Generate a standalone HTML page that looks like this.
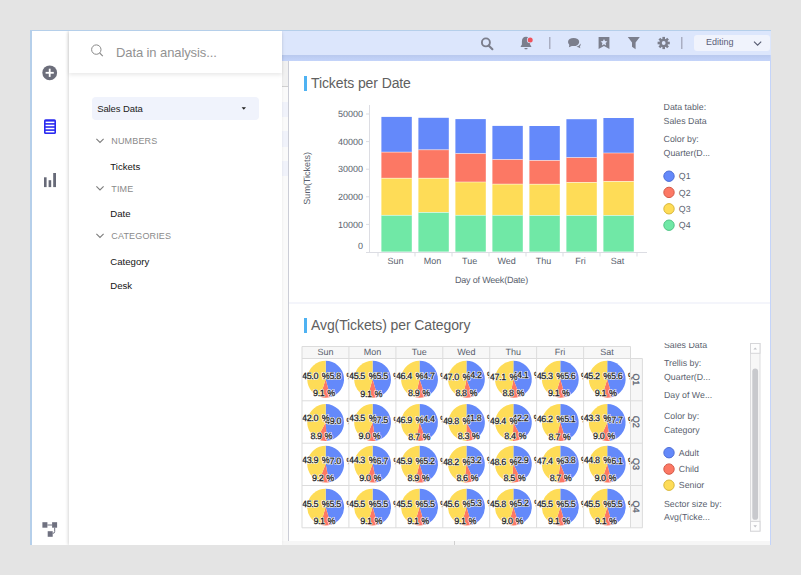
<!DOCTYPE html>
<html><head><meta charset="utf-8"><title>Analysis</title>
<style>
html,body{margin:0;padding:0}
body{width:801px;height:575px;background:#e4e4e4;position:relative;overflow:hidden;font-family:"Liberation Sans",sans-serif}
#win{position:absolute;left:30px;top:30px;width:741px;height:515px;background:#fff;overflow:hidden}
#bl{position:absolute;left:0;top:0;width:2px;height:515px;background:#b5cfea}
#bt{position:absolute;left:0;top:0;width:741px;height:1px;background:#b5cfea}
#side{position:absolute;left:2px;top:1px;width:36px;height:514px;background:#fff}
#panel{position:absolute;left:38.5px;top:1px;width:213.5px;height:514px;background:#fff;box-shadow:-1px 0 3px rgba(0,0,0,0.16)}
#phead{position:absolute;left:0;top:0;width:213.5px;height:42px;background:#fff;box-shadow:0 2px 4px rgba(0,0,0,0.09)}
#ptitle{position:absolute;left:47.5px;top:13.5px;font-size:13px;letter-spacing:-0.1px;color:#929292;white-space:nowrap;line-height:16px}
#dd{position:absolute;left:23px;top:66px;width:167px;height:22.6px;background:#f0f3fc;border-radius:4px}
#dd span{position:absolute;left:5.7px;top:5.5px;font-size:9.5px;letter-spacing:-0.1px;color:#222;line-height:12px;white-space:nowrap}
.grp{position:absolute;left:42.8px;font-size:9px;letter-spacing:0.15px;color:#8a8a8a;line-height:12px;white-space:nowrap}
.itm{position:absolute;left:41.8px;font-size:9.6px;color:#151515;line-height:12px;white-space:nowrap}
#tb{position:absolute;left:252px;top:1px;width:489px;height:24px;background:#dce6fc}
#tb2{position:absolute;left:252px;top:25px;width:489px;height:6px;background:linear-gradient(#b9c9ee,#c4d4fa)}
#edit{position:absolute;left:664px;top:4.2px;width:76px;height:15.8px;background:#f0f3fc;border-radius:3px}
#edit span{position:absolute;left:12px;top:1px;font-size:9px;color:#5b6078;line-height:12px}
#strip{position:absolute;left:252px;top:31px;width:6px;height:484px;background:#fafafa}
#vline{position:absolute;left:258px;top:31px;width:1px;height:480px;background:#cbcdd6}
#strip i{position:absolute;left:0;width:6px;display:block}
#br{position:absolute;left:740px;top:25px;width:1px;height:490px;background:#c4d4fa}
#bot{position:absolute;left:252px;top:510.7px;width:487.5px;height:4.3px;background:#f6f6f6}
#sep{position:absolute;left:259px;top:272px;width:481px;height:2px;background:#f4f5fb}
.ttl{position:absolute;font-size:14px;letter-spacing:-0.1px;color:#606060;line-height:18px;white-space:nowrap}
.mark{position:absolute;width:3px;height:15.5px;background:#4fb2f2}
svg text{font-family:"Liberation Sans",sans-serif;text-rendering:geometricPrecision}
.ax{font-size:9px;fill:#5a5f6e}
.lg{font-size:8.8px;fill:#5a5f6e}
.ph{font-size:9px;letter-spacing:-0.4px;word-spacing:0.7px;fill:#fff;stroke:rgba(255,255,255,0.9);stroke-width:1.6px;stroke-linejoin:round}
.pl{font-size:9px;letter-spacing:-0.4px;word-spacing:0.7px;fill:#1c1c1c;stroke:#1c1c1c;stroke-width:0.25px}
#ov{position:absolute;left:0;top:0}
</style></head><body>
<div id="win">
 <div id="side"></div>
 <div id="tb"><div id="edit" style="left:412px"><span>Editing</span></div></div>
 <div id="tb2"></div>
 <div id="strip"><i style="top:0;height:25.5px;background:#f1f1f1"></i><i style="top:25px;height:1px;background:#d0d0d0"></i><i style="top:40.5px;height:15px;background:#f0f2fa"></i><i style="top:70px;height:15.5px;background:#f0f2fa"></i><i style="top:100px;height:15px;background:#f0f2fa"></i></div><div id="vline"></div>
 <div id="br"></div>
 <div id="sep"></div>
 <div id="bot"></div>
 <div class="mark" style="left:274.3px;top:45.5px"></div>
 <div class="ttl" style="left:281px;top:44px">Tickets per Date</div>
 <div class="mark" style="left:274.3px;top:287.5px"></div>
 <div class="ttl" style="left:281px;top:286px">Avg(Tickets) per Category</div>
 <div id="panel">
  <div id="dd"><span>Sales Data</span></div>
  <div class="grp" style="top:103.5px">NUMBERS</div>
  <div class="itm" style="top:129.5px">Tickets</div>
  <div class="grp" style="top:151.5px">TIME</div>
  <div class="itm" style="top:177px">Date</div>
  <div class="grp" style="top:199px">CATEGORIES</div>
  <div class="itm" style="top:225px">Category</div>
  <div class="itm" style="top:248.5px">Desk</div>
  <div id="phead"><div id="ptitle">Data in analysis...</div></div>
 </div>
 <div id="bl"></div><div id="bt"></div>
</div>
<svg id="ov" width="801" height="575" viewBox="0 0 801 575">
<!-- sidebar icons -->
<circle cx="49.7" cy="72.8" r="7.4" fill="#6c6e7b"/>
<rect x="45.6" y="71.9" width="8.2" height="1.8" fill="#fff"/><rect x="48.8" y="68.7" width="1.8" height="8.2" fill="#fff"/>
<rect x="44" y="119.2" width="12" height="14.8" rx="1.6" fill="#2a2af0"/>
<rect x="45.6" y="121.6" width="8.8" height="1.5" fill="#fff"/><rect x="45.6" y="124.7" width="8.8" height="1.5" fill="#fff"/><rect x="45.6" y="127.8" width="8.8" height="1.5" fill="#fff"/><rect x="45.6" y="130.9" width="8.8" height="1.5" fill="#fff"/>
<rect x="44" y="177.3" width="2.6" height="9.8" fill="#676a78"/><rect x="48.6" y="180.2" width="2.6" height="6.9" fill="#676a78"/><rect x="53.2" y="173" width="2.8" height="14.1" fill="#676a78"/>
<rect x="42.4" y="522.2" width="5" height="5.5" fill="#6f7180"/><rect x="52.1" y="522.2" width="5" height="5.5" fill="#6f7180"/><rect x="47.7" y="531.2" width="5" height="5.6" fill="#6f7180"/>
<path d="M47.4 525H52.1M54.7 527.7V531.5Q54.7 533.4 52.7 533.4" stroke="#6f7180" stroke-width="1" fill="none"/>
<!-- panel search -->
<circle cx="96.3" cy="49.6" r="4.7" fill="none" stroke="#8a8a8a" stroke-width="1"/><path d="M99.7 53L102.8 56.1" stroke="#8a8a8a" stroke-width="1.1"/>
<path d="M241.6 107.2h4.4l-2.2 2.6z" fill="#222"/>
<path d="M96.4 138.8l3.6 3.6 3.6-3.6" stroke="#7d7d7d" stroke-width="1.1" fill="none"/>
<path d="M96.4 186.4l3.6 3.6 3.6-3.6" stroke="#7d7d7d" stroke-width="1.1" fill="none"/>
<path d="M96.4 233.9l3.6 3.6 3.6-3.6" stroke="#7d7d7d" stroke-width="1.1" fill="none"/>
<!-- toolbar icons -->
<g fill="#7b7e8c" stroke="none">
<circle cx="485.9" cy="42.4" r="4" fill="none" stroke="#7b7e8c" stroke-width="1.9"/><path d="M488.6 45.4L492.4 49.2" stroke="#7b7e8c" stroke-width="2.1" stroke-linecap="round"/>
<path d="M526 36.8c-2.6 0-4.1 2-4.1 4.6v3.2l-1.2 1.8v0.7h10.6v-0.7l-1.2-1.8v-3.2c0-2.6-1.5-4.6-4.1-4.6z"/><rect x="524.4" y="48" width="3.2" height="1.2" rx="0.6"/>
<circle cx="530.2" cy="40" r="3.3" fill="#dce6fc"/><circle cx="530.2" cy="40" r="2.5" fill="#f0525c"/>
<rect x="549" y="37" width="1.5" height="12" fill="#a9aec2"/>
<ellipse cx="573.6" cy="42" rx="5.6" ry="4.1"/><path d="M569.5 44l-0.6 3.3 3.6-1.6z"/><path d="M576.5 46.6c2.2-0.4 3.4-1.6 3.9-3.2 0.6 1.2 0 2.6-0.6 3.2l0.6 1.6-2-0.9c-0.8 0.1-1.4-0.2-1.9-0.7z"/>
<path d="M598.6 37h10.8v11.9l-5.4-3-5.4 3z"/><path d="M604 38.9l1 2.2 2.4 0.3-1.8 1.6 0.5 2.4-2.1-1.2-2.1 1.2 0.5-2.4-1.8-1.6 2.4-0.3z" fill="#dce6fc"/>
<path d="M627.8 37h12l-4.2 5.6v6.6l-3.6-2.4v-4.2z"/>
<rect x="681" y="37" width="1.5" height="12" fill="#a9aec2"/>
</g>
<g transform="translate(663.7,43)" fill="#7b7e8c">
<circle r="4.3"/>
<rect x="-1.3" y="-6.1" width="2.6" height="3" transform="rotate(0)"/><rect x="-1.3" y="-6.1" width="2.6" height="3" transform="rotate(45)"/><rect x="-1.3" y="-6.1" width="2.6" height="3" transform="rotate(90)"/><rect x="-1.3" y="-6.1" width="2.6" height="3" transform="rotate(135)"/><rect x="-1.3" y="-6.1" width="2.6" height="3" transform="rotate(180)"/><rect x="-1.3" y="-6.1" width="2.6" height="3" transform="rotate(225)"/><rect x="-1.3" y="-6.1" width="2.6" height="3" transform="rotate(270)"/><rect x="-1.3" y="-6.1" width="2.6" height="3" transform="rotate(315)"/>
<circle r="1.9" fill="#dce6fc"/>
</g>
<path d="M754 41.6l3.6 3.6 3.6-3.6" stroke="#555a70" stroke-width="1.1" fill="none"/>
<!-- bar chart -->
<rect x="369" y="105" width="1" height="147.5" fill="#dcdde3"/>
<rect x="366" y="252" width="281" height="1" fill="#dcdde3"/>
<rect x="366" y="113.5" width="3" height="1" fill="#dcdde3"/>
<rect x="366" y="141.1" width="3" height="1" fill="#dcdde3"/>
<rect x="366" y="168.7" width="3" height="1" fill="#dcdde3"/>
<rect x="366" y="196.3" width="3" height="1" fill="#dcdde3"/>
<rect x="366" y="223.9" width="3" height="1" fill="#dcdde3"/>
<rect x="377.5" y="252" width="1" height="4.5" fill="#dcdde3"/>
<rect x="414.5" y="252" width="1" height="4.5" fill="#dcdde3"/>
<rect x="451.5" y="252" width="1" height="4.5" fill="#dcdde3"/>
<rect x="488.5" y="252" width="1" height="4.5" fill="#dcdde3"/>
<rect x="525.5" y="252" width="1" height="4.5" fill="#dcdde3"/>
<rect x="562.5" y="252" width="1" height="4.5" fill="#dcdde3"/>
<rect x="599.5" y="252" width="1" height="4.5" fill="#dcdde3"/>
<rect x="636.5" y="252" width="1" height="4.5" fill="#dcdde3"/>
<rect x="381.4" y="116.9" width="30.4" height="35.2" fill="#6489FA"/>
<rect x="381.4" y="152.1" width="30.4" height="26.1" fill="#FC7864"/>
<rect x="381.4" y="178.2" width="30.4" height="37.1" fill="#FEDC57"/>
<rect x="381.4" y="215.3" width="30.4" height="36.3" fill="#70E8A6"/>
<rect x="381.4" y="151.7" width="30.4" height="0.8" fill="#fff" opacity="0.6"/>
<rect x="381.4" y="177.8" width="30.4" height="0.8" fill="#fff" opacity="0.6"/>
<rect x="381.4" y="214.9" width="30.4" height="0.8" fill="#fff" opacity="0.6"/>
<text x="395.6" y="264.3" text-anchor="middle" class="ax">Sun</text>
<rect x="418.4" y="117.8" width="30.4" height="32.0" fill="#6489FA"/>
<rect x="418.4" y="149.8" width="30.4" height="28.4" fill="#FC7864"/>
<rect x="418.4" y="178.2" width="30.4" height="34.2" fill="#FEDC57"/>
<rect x="418.4" y="212.4" width="30.4" height="39.2" fill="#70E8A6"/>
<rect x="418.4" y="149.4" width="30.4" height="0.8" fill="#fff" opacity="0.6"/>
<rect x="418.4" y="177.8" width="30.4" height="0.8" fill="#fff" opacity="0.6"/>
<rect x="418.4" y="212.0" width="30.4" height="0.8" fill="#fff" opacity="0.6"/>
<text x="432.6" y="264.3" text-anchor="middle" class="ax">Mon</text>
<rect x="455.4" y="119.1" width="30.4" height="34.5" fill="#6489FA"/>
<rect x="455.4" y="153.6" width="30.4" height="28.4" fill="#FC7864"/>
<rect x="455.4" y="182.0" width="30.4" height="33.3" fill="#FEDC57"/>
<rect x="455.4" y="215.3" width="30.4" height="36.3" fill="#70E8A6"/>
<rect x="455.4" y="153.2" width="30.4" height="0.8" fill="#fff" opacity="0.6"/>
<rect x="455.4" y="181.6" width="30.4" height="0.8" fill="#fff" opacity="0.6"/>
<rect x="455.4" y="214.9" width="30.4" height="0.8" fill="#fff" opacity="0.6"/>
<text x="469.6" y="264.3" text-anchor="middle" class="ax">Tue</text>
<rect x="492.4" y="125.9" width="30.4" height="33.7" fill="#6489FA"/>
<rect x="492.4" y="159.6" width="30.4" height="24.5" fill="#FC7864"/>
<rect x="492.4" y="184.1" width="30.4" height="31.2" fill="#FEDC57"/>
<rect x="492.4" y="215.3" width="30.4" height="36.3" fill="#70E8A6"/>
<rect x="492.4" y="159.2" width="30.4" height="0.8" fill="#fff" opacity="0.6"/>
<rect x="492.4" y="183.7" width="30.4" height="0.8" fill="#fff" opacity="0.6"/>
<rect x="492.4" y="214.9" width="30.4" height="0.8" fill="#fff" opacity="0.6"/>
<text x="506.6" y="264.3" text-anchor="middle" class="ax">Wed</text>
<rect x="529.4" y="126.0" width="30.4" height="34.4" fill="#6489FA"/>
<rect x="529.4" y="160.4" width="30.4" height="23.8" fill="#FC7864"/>
<rect x="529.4" y="184.2" width="30.4" height="31.2" fill="#FEDC57"/>
<rect x="529.4" y="215.4" width="30.4" height="36.2" fill="#70E8A6"/>
<rect x="529.4" y="160.0" width="30.4" height="0.8" fill="#fff" opacity="0.6"/>
<rect x="529.4" y="183.8" width="30.4" height="0.8" fill="#fff" opacity="0.6"/>
<rect x="529.4" y="215.0" width="30.4" height="0.8" fill="#fff" opacity="0.6"/>
<text x="543.6" y="264.3" text-anchor="middle" class="ax">Thu</text>
<rect x="566.4" y="119.2" width="30.4" height="38.4" fill="#6489FA"/>
<rect x="566.4" y="157.6" width="30.4" height="24.8" fill="#FC7864"/>
<rect x="566.4" y="182.4" width="30.4" height="33.0" fill="#FEDC57"/>
<rect x="566.4" y="215.4" width="30.4" height="36.2" fill="#70E8A6"/>
<rect x="566.4" y="157.2" width="30.4" height="0.8" fill="#fff" opacity="0.6"/>
<rect x="566.4" y="182.0" width="30.4" height="0.8" fill="#fff" opacity="0.6"/>
<rect x="566.4" y="215.0" width="30.4" height="0.8" fill="#fff" opacity="0.6"/>
<text x="580.6" y="264.3" text-anchor="middle" class="ax">Fri</text>
<rect x="603.4" y="118.0" width="30.4" height="35.0" fill="#6489FA"/>
<rect x="603.4" y="153.0" width="30.4" height="28.4" fill="#FC7864"/>
<rect x="603.4" y="181.4" width="30.4" height="34.0" fill="#FEDC57"/>
<rect x="603.4" y="215.4" width="30.4" height="36.2" fill="#70E8A6"/>
<rect x="603.4" y="152.6" width="30.4" height="0.8" fill="#fff" opacity="0.6"/>
<rect x="603.4" y="181.0" width="30.4" height="0.8" fill="#fff" opacity="0.6"/>
<rect x="603.4" y="215.0" width="30.4" height="0.8" fill="#fff" opacity="0.6"/>
<text x="617.6" y="264.3" text-anchor="middle" class="ax">Sat</text>
<text x="363" y="117.2" text-anchor="end" class="ax">50000</text>
<text x="363" y="144.8" text-anchor="end" class="ax">40000</text>
<text x="363" y="172.4" text-anchor="end" class="ax">30000</text>
<text x="363" y="200.0" text-anchor="end" class="ax">20000</text>
<text x="363" y="227.6" text-anchor="end" class="ax">10000</text>
<text x="363" y="248.6" text-anchor="end" class="ax">0</text>
<text x="491.5" y="283.4" text-anchor="middle" class="ax" style="letter-spacing:-0.2px">Day of Week(Date)</text>
<text transform="translate(310.3,178.3) rotate(-90)" text-anchor="middle" class="ax">Sum(Tickets)</text>
<text x="663.6" y="110.4" class="lg">Data table:</text>
<text x="663.6" y="123.7" class="lg">Sales Data</text>
<text x="663.6" y="142.2" class="lg">Color by:</text>
<text x="663.6" y="155.9" class="lg">Quarter(D...</text>
<circle cx="669" cy="176.2" r="5.2" fill="#6489FA" stroke="#4f6fd6" stroke-width="1"/><text x="678.8" y="179.39999999999998" class="lg">Q1</text>
<circle cx="669" cy="192.4" r="5.2" fill="#FC7864" stroke="#d45a48" stroke-width="1"/><text x="678.8" y="195.6" class="lg">Q2</text>
<circle cx="669" cy="208.8" r="5.2" fill="#FEDC57" stroke="#d8b73c" stroke-width="1"/><text x="678.8" y="212.0" class="lg">Q3</text>
<circle cx="669" cy="225.2" r="5.2" fill="#70E8A6" stroke="#52c486" stroke-width="1"/><text x="678.8" y="228.39999999999998" class="lg">Q4</text>
<!-- trellis -->
<rect x="302.0" y="346.5" width="328.5" height="12.0" fill="#f7f7f7"/>
<rect x="630.5" y="358.5" width="11.9" height="169.3" fill="#f7f7f7"/>
<rect x="301.5" y="346.5" width="1" height="181.3" fill="#dcdcdc"/>
<rect x="348.4" y="346.5" width="1" height="181.3" fill="#dcdcdc"/>
<rect x="395.4" y="346.5" width="1" height="181.3" fill="#dcdcdc"/>
<rect x="442.3" y="346.5" width="1" height="181.3" fill="#dcdcdc"/>
<rect x="489.2" y="346.5" width="1" height="181.3" fill="#dcdcdc"/>
<rect x="536.1" y="346.5" width="1" height="181.3" fill="#dcdcdc"/>
<rect x="583.1" y="346.5" width="1" height="181.3" fill="#dcdcdc"/>
<rect x="630.0" y="346.5" width="1" height="181.3" fill="#dcdcdc"/>
<rect x="641.9" y="358.5" width="1" height="169.3" fill="#dcdcdc"/>
<rect x="302.0" y="346.0" width="328.5" height="1" fill="#dcdcdc"/>
<rect x="302.0" y="358.0" width="340.4" height="1" fill="#dcdcdc"/>
<rect x="302.0" y="400.3" width="340.4" height="1" fill="#dcdcdc"/>
<rect x="302.0" y="442.7" width="340.4" height="1" fill="#dcdcdc"/>
<rect x="302.0" y="485.0" width="340.4" height="1" fill="#dcdcdc"/>
<rect x="302.0" y="527.3" width="340.4" height="1" fill="#dcdcdc"/>
<text x="325.5" y="355.0" text-anchor="middle" class="ax">Sun</text>
<text x="372.4" y="355.0" text-anchor="middle" class="ax">Mon</text>
<text x="419.3" y="355.0" text-anchor="middle" class="ax">Tue</text>
<text x="466.3" y="355.0" text-anchor="middle" class="ax">Wed</text>
<text x="513.2" y="355.0" text-anchor="middle" class="ax">Thu</text>
<text x="560.1" y="355.0" text-anchor="middle" class="ax">Fri</text>
<text x="607.0" y="355.0" text-anchor="middle" class="ax">Sat</text>
<text transform="translate(633.2,379.4) rotate(90)" text-anchor="middle" class="ax" style="stroke:#5a5f6e;stroke-width:0.3px">Q1</text>
<text transform="translate(633.2,421.7) rotate(90)" text-anchor="middle" class="ax" style="stroke:#5a5f6e;stroke-width:0.3px">Q2</text>
<text transform="translate(633.2,464.0) rotate(90)" text-anchor="middle" class="ax" style="stroke:#5a5f6e;stroke-width:0.3px">Q3</text>
<text transform="translate(633.2,506.4) rotate(90)" text-anchor="middle" class="ax" style="stroke:#5a5f6e;stroke-width:0.3px">Q4</text>
<svg x="302.50" y="359.00" width="45.93" height="41.33" viewBox="0.5 0.5 45.93 41.33"><path d="M23.66 20.77L23.66 2.37A18.4 18.4 0 0 1 28.41 38.54Z" fill="#6489FA"/><path d="M23.66 20.77L28.41 38.54A18.4 18.4 0 0 1 18.03 38.28Z" fill="#FC7864"/><path d="M23.66 20.77L18.03 38.28A18.4 18.4 0 0 1 23.66 2.37Z" fill="#FEDC57"/><text x="22.9" y="20.5" class="ph">45.8 <tspan dx="2.8">%</tspan></text><text x="22.9" y="20.5" class="pl">45.8 <tspan dx="2.8">%</tspan></text><text x="11.1" y="37.9" class="ph">9.1 %</text><text x="11.1" y="37.9" class="pl">9.1 %</text><text x="0.1" y="20.1" class="ph">45.0 <tspan dx="0.9">%</tspan></text><text x="0.1" y="20.1" class="pl">45.0 <tspan dx="0.9">%</tspan></text></svg>
<svg x="349.43" y="359.00" width="45.93" height="41.33" viewBox="0.5 0.5 45.93 41.33"><path d="M23.66 20.77L23.66 2.37A18.4 18.4 0 0 1 28.85 38.42Z" fill="#6489FA"/><path d="M23.66 20.77L28.85 38.42A18.4 18.4 0 0 1 18.48 38.42Z" fill="#FC7864"/><path d="M23.66 20.77L18.48 38.42A18.4 18.4 0 0 1 23.66 2.37Z" fill="#FEDC57"/><text x="22.9" y="20.3" class="ph">45.5 <tspan dx="2.8">%</tspan></text><text x="22.9" y="20.3" class="pl">45.5 <tspan dx="2.8">%</tspan></text><text x="11.4" y="38.0" class="ph">9.1 %</text><text x="11.4" y="38.0" class="pl">9.1 %</text><text x="0.1" y="20.3" class="ph">45.5 <tspan dx="0.9">%</tspan></text><text x="0.1" y="20.3" class="pl">45.5 <tspan dx="0.9">%</tspan></text></svg>
<svg x="396.36" y="359.00" width="45.93" height="41.33" viewBox="0.5 0.5 45.93 41.33"><path d="M23.66 20.77L23.66 2.37A18.4 18.4 0 0 1 29.68 38.15Z" fill="#6489FA"/><path d="M23.66 20.77L29.68 38.15A18.4 18.4 0 0 1 19.54 38.70Z" fill="#FC7864"/><path d="M23.66 20.77L19.54 38.70A18.4 18.4 0 0 1 23.66 2.37Z" fill="#FEDC57"/><text x="22.9" y="20.0" class="ph">44.7 <tspan dx="2.8">%</tspan></text><text x="22.9" y="20.0" class="pl">44.7 <tspan dx="2.8">%</tspan></text><text x="12.2" y="37.9" class="ph">8.9 %</text><text x="12.2" y="37.9" class="pl">8.9 %</text><text x="0.1" y="20.7" class="ph">46.4 <tspan dx="0.9">%</tspan></text><text x="0.1" y="20.7" class="pl">46.4 <tspan dx="0.9">%</tspan></text></svg>
<svg x="443.29" y="359.00" width="45.93" height="41.33" viewBox="0.5 0.5 45.93 41.33"><path d="M23.66 20.77L23.66 2.37A18.4 18.4 0 0 1 30.22 37.96Z" fill="#6489FA"/><path d="M23.66 20.77L30.22 37.96A18.4 18.4 0 0 1 20.22 38.84Z" fill="#FC7864"/><path d="M23.66 20.77L20.22 38.84A18.4 18.4 0 0 1 23.66 2.37Z" fill="#FEDC57"/><text x="22.8" y="19.8" class="ph">44.2 <tspan dx="2.8">%</tspan></text><text x="22.8" y="19.8" class="pl">44.2 <tspan dx="2.8">%</tspan></text><text x="12.6" y="37.8" class="ph">8.8 %</text><text x="12.6" y="37.8" class="pl">8.8 %</text><text x="0.1" y="21.0" class="ph">47.0 <tspan dx="0.9">%</tspan></text><text x="0.1" y="21.0" class="pl">47.0 <tspan dx="0.9">%</tspan></text></svg>
<svg x="490.22" y="359.00" width="45.93" height="41.33" viewBox="0.5 0.5 45.93 41.33"><path d="M23.66 20.77L23.66 2.37A18.4 18.4 0 0 1 30.33 37.92Z" fill="#6489FA"/><path d="M23.66 20.77L30.33 37.92A18.4 18.4 0 0 1 20.33 38.86Z" fill="#FC7864"/><path d="M23.66 20.77L20.33 38.86A18.4 18.4 0 0 1 23.66 2.37Z" fill="#FEDC57"/><text x="22.8" y="19.7" class="ph">44.1 <tspan dx="2.8">%</tspan></text><text x="22.8" y="19.7" class="pl">44.1 <tspan dx="2.8">%</tspan></text><text x="12.7" y="37.7" class="ph">8.8 %</text><text x="12.7" y="37.7" class="pl">8.8 %</text><text x="0.1" y="21.0" class="ph">47.1 <tspan dx="0.9">%</tspan></text><text x="0.1" y="21.0" class="pl">47.1 <tspan dx="0.9">%</tspan></text></svg>
<svg x="537.15" y="359.00" width="45.93" height="41.33" viewBox="0.5 0.5 45.93 41.33"><path d="M23.66 20.77L23.66 2.37A18.4 18.4 0 0 1 28.69 38.47Z" fill="#6489FA"/><path d="M23.66 20.77L28.69 38.47A18.4 18.4 0 0 1 18.31 38.37Z" fill="#FC7864"/><path d="M23.66 20.77L18.31 38.37A18.4 18.4 0 0 1 23.66 2.37Z" fill="#FEDC57"/><text x="22.9" y="20.4" class="ph">45.6 <tspan dx="2.8">%</tspan></text><text x="22.9" y="20.4" class="pl">45.6 <tspan dx="2.8">%</tspan></text><text x="11.3" y="37.9" class="ph">9.1 %</text><text x="11.3" y="37.9" class="pl">9.1 %</text><text x="0.1" y="20.2" class="ph">45.3 <tspan dx="0.9">%</tspan></text><text x="0.1" y="20.2" class="pl">45.3 <tspan dx="0.9">%</tspan></text></svg>
<svg x="584.08" y="359.00" width="45.93" height="41.33" viewBox="0.5 0.5 45.93 41.33"><path d="M23.66 20.77L23.66 2.37A18.4 18.4 0 0 1 28.64 38.48Z" fill="#6489FA"/><path d="M23.66 20.77L28.64 38.48A18.4 18.4 0 0 1 18.25 38.35Z" fill="#FC7864"/><path d="M23.66 20.77L18.25 38.35A18.4 18.4 0 0 1 23.66 2.37Z" fill="#FEDC57"/><text x="22.9" y="20.4" class="ph">45.6 <tspan dx="2.8">%</tspan></text><text x="22.9" y="20.4" class="pl">45.6 <tspan dx="2.8">%</tspan></text><text x="11.2" y="37.9" class="ph">9.1 %</text><text x="11.2" y="37.9" class="pl">9.1 %</text><text x="0.1" y="20.2" class="ph">45.2 <tspan dx="0.9">%</tspan></text><text x="0.1" y="20.2" class="pl">45.2 <tspan dx="0.9">%</tspan></text></svg>
<svg x="302.50" y="401.33" width="45.93" height="41.33" viewBox="0.5 0.5 45.93 41.33"><path d="M23.66 21.66L23.66 3.27A18.4 18.4 0 0 1 24.76 40.03Z" fill="#6489FA"/><path d="M23.66 21.66L24.76 40.03A18.4 18.4 0 0 1 14.84 37.81Z" fill="#FC7864"/><path d="M23.66 21.66L14.84 37.81A18.4 18.4 0 0 1 23.66 3.27Z" fill="#FEDC57"/><text x="23.1" y="22.7" class="ph">49.0 <tspan dx="2.8">%</tspan></text><text x="23.1" y="22.7" class="pl">49.0 <tspan dx="2.8">%</tspan></text><text x="8.4" y="38.2" class="ph">8.9 %</text><text x="8.4" y="38.2" class="pl">8.9 %</text><text x="0.1" y="19.8" class="ph">42.0 <tspan dx="0.9">%</tspan></text><text x="0.1" y="19.8" class="pl">42.0 <tspan dx="0.9">%</tspan></text></svg>
<svg x="349.43" y="401.33" width="45.93" height="41.33" viewBox="0.5 0.5 45.93 41.33"><path d="M23.66 21.66L23.66 3.27A18.4 18.4 0 0 1 26.54 39.84Z" fill="#6489FA"/><path d="M23.66 21.66L26.54 39.84A18.4 18.4 0 0 1 16.36 38.55Z" fill="#FC7864"/><path d="M23.66 21.66L16.36 38.55A18.4 18.4 0 0 1 23.66 3.27Z" fill="#FEDC57"/><text x="23.0" y="22.1" class="ph">47.5 <tspan dx="2.8">%</tspan></text><text x="23.0" y="22.1" class="pl">47.5 <tspan dx="2.8">%</tspan></text><text x="9.7" y="38.5" class="ph">9.0 %</text><text x="9.7" y="38.5" class="pl">9.0 %</text><text x="0.1" y="20.4" class="ph">43.5 <tspan dx="0.9">%</tspan></text><text x="0.1" y="20.4" class="pl">43.5 <tspan dx="0.9">%</tspan></text></svg>
<svg x="396.36" y="401.33" width="45.93" height="41.33" viewBox="0.5 0.5 45.93 41.33"><path d="M23.66 21.66L23.66 3.27A18.4 18.4 0 0 1 30.01 38.94Z" fill="#6489FA"/><path d="M23.66 21.66L30.01 38.94A18.4 18.4 0 0 1 20.10 39.72Z" fill="#FC7864"/><path d="M23.66 21.66L20.10 39.72A18.4 18.4 0 0 1 23.66 3.27Z" fill="#FEDC57"/><text x="22.8" y="20.7" class="ph">44.4 <tspan dx="2.8">%</tspan></text><text x="22.8" y="20.7" class="pl">44.4 <tspan dx="2.8">%</tspan></text><text x="12.5" y="38.7" class="ph">8.7 %</text><text x="12.5" y="38.7" class="pl">8.7 %</text><text x="0.1" y="21.8" class="ph">46.9 <tspan dx="0.9">%</tspan></text><text x="0.1" y="21.8" class="pl">46.9 <tspan dx="0.9">%</tspan></text></svg>
<svg x="443.29" y="401.33" width="45.93" height="41.33" viewBox="0.5 0.5 45.93 41.33"><path d="M23.66 21.66L23.66 3.27A18.4 18.4 0 0 1 32.69 37.70Z" fill="#6489FA"/><path d="M23.66 21.66L32.69 37.70A18.4 18.4 0 0 1 23.49 40.06Z" fill="#FC7864"/><path d="M23.66 21.66L23.49 40.06A18.4 18.4 0 0 1 23.66 3.27Z" fill="#FEDC57"/><text x="22.6" y="19.7" class="ph">41.8 <tspan dx="2.8">%</tspan></text><text x="22.6" y="19.7" class="pl">41.8 <tspan dx="2.8">%</tspan></text><text x="14.9" y="38.0" class="ph">8.3 %</text><text x="14.9" y="38.0" class="pl">8.3 %</text><text x="0.1" y="23.1" class="ph">49.8 <tspan dx="0.9">%</tspan></text><text x="0.1" y="23.1" class="pl">49.8 <tspan dx="0.9">%</tspan></text></svg>
<svg x="490.22" y="401.33" width="45.93" height="41.33" viewBox="0.5 0.5 45.93 41.33"><path d="M23.66 21.66L23.66 3.27A18.4 18.4 0 0 1 32.33 37.90Z" fill="#6489FA"/><path d="M23.66 21.66L32.33 37.90A18.4 18.4 0 0 1 22.97 40.05Z" fill="#FC7864"/><path d="M23.66 21.66L22.97 40.05A18.4 18.4 0 0 1 23.66 3.27Z" fill="#FEDC57"/><text x="22.6" y="19.8" class="ph">42.2 <tspan dx="2.8">%</tspan></text><text x="22.6" y="19.8" class="pl">42.2 <tspan dx="2.8">%</tspan></text><text x="14.6" y="38.1" class="ph">8.4 %</text><text x="14.6" y="38.1" class="pl">8.4 %</text><text x="0.1" y="22.9" class="ph">49.4 <tspan dx="0.9">%</tspan></text><text x="0.1" y="22.9" class="pl">49.4 <tspan dx="0.9">%</tspan></text></svg>
<svg x="537.15" y="401.33" width="45.93" height="41.33" viewBox="0.5 0.5 45.93 41.33"><path d="M23.66 21.66L23.66 3.27A18.4 18.4 0 0 1 29.24 39.20Z" fill="#6489FA"/><path d="M23.66 21.66L29.24 39.20A18.4 18.4 0 0 1 19.31 39.54Z" fill="#FC7864"/><path d="M23.66 21.66L19.31 39.54A18.4 18.4 0 0 1 23.66 3.27Z" fill="#FEDC57"/><text x="22.9" y="21.0" class="ph">45.1 <tspan dx="2.8">%</tspan></text><text x="22.9" y="21.0" class="pl">45.1 <tspan dx="2.8">%</tspan></text><text x="11.9" y="38.8" class="ph">8.7 %</text><text x="11.9" y="38.8" class="pl">8.7 %</text><text x="0.1" y="21.5" class="ph">46.2 <tspan dx="0.9">%</tspan></text><text x="0.1" y="21.5" class="pl">46.2 <tspan dx="0.9">%</tspan></text></svg>
<svg x="584.08" y="401.33" width="45.93" height="41.33" viewBox="0.5 0.5 45.93 41.33"><path d="M23.66 21.66L23.66 3.27A18.4 18.4 0 0 1 26.31 39.87Z" fill="#6489FA"/><path d="M23.66 21.66L26.31 39.87A18.4 18.4 0 0 1 16.15 38.46Z" fill="#FC7864"/><path d="M23.66 21.66L16.15 38.46A18.4 18.4 0 0 1 23.66 3.27Z" fill="#FEDC57"/><text x="23.0" y="22.2" class="ph">47.7 <tspan dx="2.8">%</tspan></text><text x="23.0" y="22.2" class="pl">47.7 <tspan dx="2.8">%</tspan></text><text x="9.5" y="38.5" class="ph">9.0 %</text><text x="9.5" y="38.5" class="pl">9.0 %</text><text x="0.1" y="20.3" class="ph">43.3 <tspan dx="0.9">%</tspan></text><text x="0.1" y="20.3" class="pl">43.3 <tspan dx="0.9">%</tspan></text></svg>
<svg x="302.50" y="443.66" width="45.93" height="41.33" viewBox="0.5 0.5 45.93 41.33"><path d="M23.66 20.96L23.66 2.57A18.4 18.4 0 0 1 27.17 39.03Z" fill="#6489FA"/><path d="M23.66 20.96L27.17 39.03A18.4 18.4 0 0 1 16.74 38.01Z" fill="#FC7864"/><path d="M23.66 20.96L16.74 38.01A18.4 18.4 0 0 1 23.66 2.57Z" fill="#FEDC57"/><text x="23.0" y="21.1" class="ph">47.0 <tspan dx="2.8">%</tspan></text><text x="23.0" y="21.1" class="pl">47.0 <tspan dx="2.8">%</tspan></text><text x="10.1" y="37.9" class="ph">9.2 %</text><text x="10.1" y="37.9" class="pl">9.2 %</text><text x="0.1" y="19.8" class="ph">43.9 <tspan dx="0.9">%</tspan></text><text x="0.1" y="19.8" class="pl">43.9 <tspan dx="0.9">%</tspan></text></svg>
<svg x="349.43" y="443.66" width="45.93" height="41.33" viewBox="0.5 0.5 45.93 41.33"><path d="M23.66 20.96L23.66 2.57A18.4 18.4 0 0 1 27.45 38.97Z" fill="#6489FA"/><path d="M23.66 20.96L27.45 38.97A18.4 18.4 0 0 1 17.22 38.20Z" fill="#FC7864"/><path d="M23.66 20.96L17.22 38.20A18.4 18.4 0 0 1 23.66 2.57Z" fill="#FEDC57"/><text x="23.0" y="21.0" class="ph">46.7 <tspan dx="2.8">%</tspan></text><text x="23.0" y="21.0" class="pl">46.7 <tspan dx="2.8">%</tspan></text><text x="10.4" y="38.0" class="ph">9.0 %</text><text x="10.4" y="38.0" class="pl">9.0 %</text><text x="0.1" y="20.0" class="ph">44.3 <tspan dx="0.9">%</tspan></text><text x="0.1" y="20.0" class="pl">44.3 <tspan dx="0.9">%</tspan></text></svg>
<svg x="396.36" y="443.66" width="45.93" height="41.33" viewBox="0.5 0.5 45.93 41.33"><path d="M23.66 20.96L23.66 2.57A18.4 18.4 0 0 1 29.13 38.53Z" fill="#6489FA"/><path d="M23.66 20.96L29.13 38.53A18.4 18.4 0 0 1 18.98 38.76Z" fill="#FC7864"/><path d="M23.66 20.96L18.98 38.76A18.4 18.4 0 0 1 23.66 2.57Z" fill="#FEDC57"/><text x="22.9" y="20.4" class="ph">45.2 <tspan dx="2.8">%</tspan></text><text x="22.9" y="20.4" class="pl">45.2 <tspan dx="2.8">%</tspan></text><text x="11.7" y="38.1" class="ph">8.9 %</text><text x="11.7" y="38.1" class="pl">8.9 %</text><text x="0.1" y="20.7" class="ph">45.9 <tspan dx="0.9">%</tspan></text><text x="0.1" y="20.7" class="pl">45.9 <tspan dx="0.9">%</tspan></text></svg>
<svg x="443.29" y="443.66" width="45.93" height="41.33" viewBox="0.5 0.5 45.93 41.33"><path d="M23.66 20.96L23.66 2.57A18.4 18.4 0 0 1 31.29 37.71Z" fill="#6489FA"/><path d="M23.66 20.96L31.29 37.71A18.4 18.4 0 0 1 21.59 39.25Z" fill="#FC7864"/><path d="M23.66 20.96L21.59 39.25A18.4 18.4 0 0 1 23.66 2.57Z" fill="#FEDC57"/><text x="22.7" y="19.5" class="ph">43.2 <tspan dx="2.8">%</tspan></text><text x="22.7" y="19.5" class="pl">43.2 <tspan dx="2.8">%</tspan></text><text x="13.6" y="37.7" class="ph">8.6 %</text><text x="13.6" y="37.7" class="pl">8.6 %</text><text x="0.1" y="21.7" class="ph">48.2 <tspan dx="0.9">%</tspan></text><text x="0.1" y="21.7" class="pl">48.2 <tspan dx="0.9">%</tspan></text></svg>
<svg x="490.22" y="443.66" width="45.93" height="41.33" viewBox="0.5 0.5 45.93 41.33"><path d="M23.66 20.96L23.66 2.57A18.4 18.4 0 0 1 31.60 37.56Z" fill="#6489FA"/><path d="M23.66 20.96L31.60 37.56A18.4 18.4 0 0 1 22.05 39.29Z" fill="#FC7864"/><path d="M23.66 20.96L22.05 39.29A18.4 18.4 0 0 1 23.66 2.57Z" fill="#FEDC57"/><text x="22.7" y="19.4" class="ph">42.9 <tspan dx="2.8">%</tspan></text><text x="22.7" y="19.4" class="pl">42.9 <tspan dx="2.8">%</tspan></text><text x="13.9" y="37.6" class="ph">8.5 %</text><text x="13.9" y="37.6" class="pl">8.5 %</text><text x="0.1" y="21.9" class="ph">48.6 <tspan dx="0.9">%</tspan></text><text x="0.1" y="21.9" class="pl">48.6 <tspan dx="0.9">%</tspan></text></svg>
<svg x="537.15" y="443.66" width="45.93" height="41.33" viewBox="0.5 0.5 45.93 41.33"><path d="M23.66 20.96L23.66 2.57A18.4 18.4 0 0 1 30.61 38.01Z" fill="#6489FA"/><path d="M23.66 20.96L30.61 38.01A18.4 18.4 0 0 1 20.73 39.13Z" fill="#FC7864"/><path d="M23.66 20.96L20.73 39.13A18.4 18.4 0 0 1 23.66 2.57Z" fill="#FEDC57"/><text x="22.8" y="19.8" class="ph">43.8 <tspan dx="2.8">%</tspan></text><text x="22.8" y="19.8" class="pl">43.8 <tspan dx="2.8">%</tspan></text><text x="13.0" y="37.9" class="ph">8.7 %</text><text x="13.0" y="37.9" class="pl">8.7 %</text><text x="0.1" y="21.3" class="ph">47.4 <tspan dx="0.9">%</tspan></text><text x="0.1" y="21.3" class="pl">47.4 <tspan dx="0.9">%</tspan></text></svg>
<svg x="584.08" y="443.66" width="45.93" height="41.33" viewBox="0.5 0.5 45.93 41.33"><path d="M23.66 20.96L23.66 2.57A18.4 18.4 0 0 1 28.08 38.83Z" fill="#6489FA"/><path d="M23.66 20.96L28.08 38.83A18.4 18.4 0 0 1 17.81 38.41Z" fill="#FC7864"/><path d="M23.66 20.96L17.81 38.41A18.4 18.4 0 0 1 23.66 2.57Z" fill="#FEDC57"/><text x="23.0" y="20.8" class="ph">46.1 <tspan dx="2.8">%</tspan></text><text x="23.0" y="20.8" class="pl">46.1 <tspan dx="2.8">%</tspan></text><text x="10.8" y="38.1" class="ph">9.0 %</text><text x="10.8" y="38.1" class="pl">9.0 %</text><text x="0.1" y="20.2" class="ph">44.8 <tspan dx="0.9">%</tspan></text><text x="0.1" y="20.2" class="pl">44.8 <tspan dx="0.9">%</tspan></text></svg>
<svg x="302.50" y="485.99" width="45.93" height="41.33" viewBox="0.5 0.5 45.93 41.33"><path d="M23.66 21.56L23.66 3.16A18.4 18.4 0 0 1 28.85 39.22Z" fill="#6489FA"/><path d="M23.66 21.56L28.85 39.22A18.4 18.4 0 0 1 18.48 39.22Z" fill="#FC7864"/><path d="M23.66 21.56L18.48 39.22A18.4 18.4 0 0 1 23.66 3.16Z" fill="#FEDC57"/><text x="22.9" y="21.1" class="ph">45.5 <tspan dx="2.8">%</tspan></text><text x="22.9" y="21.1" class="pl">45.5 <tspan dx="2.8">%</tspan></text><text x="11.4" y="38.8" class="ph">9.1 %</text><text x="11.4" y="38.8" class="pl">9.1 %</text><text x="0.1" y="21.1" class="ph">45.5 <tspan dx="0.9">%</tspan></text><text x="0.1" y="21.1" class="pl">45.5 <tspan dx="0.9">%</tspan></text></svg>
<svg x="349.43" y="485.99" width="45.93" height="41.33" viewBox="0.5 0.5 45.93 41.33"><path d="M23.66 21.56L23.66 3.16A18.4 18.4 0 0 1 28.85 39.22Z" fill="#6489FA"/><path d="M23.66 21.56L28.85 39.22A18.4 18.4 0 0 1 18.48 39.22Z" fill="#FC7864"/><path d="M23.66 21.56L18.48 39.22A18.4 18.4 0 0 1 23.66 3.16Z" fill="#FEDC57"/><text x="22.9" y="21.1" class="ph">45.5 <tspan dx="2.8">%</tspan></text><text x="22.9" y="21.1" class="pl">45.5 <tspan dx="2.8">%</tspan></text><text x="11.4" y="38.8" class="ph">9.1 %</text><text x="11.4" y="38.8" class="pl">9.1 %</text><text x="0.1" y="21.1" class="ph">45.5 <tspan dx="0.9">%</tspan></text><text x="0.1" y="21.1" class="pl">45.5 <tspan dx="0.9">%</tspan></text></svg>
<svg x="396.36" y="485.99" width="45.93" height="41.33" viewBox="0.5 0.5 45.93 41.33"><path d="M23.66 21.56L23.66 3.16A18.4 18.4 0 0 1 28.85 39.22Z" fill="#6489FA"/><path d="M23.66 21.56L28.85 39.22A18.4 18.4 0 0 1 18.48 39.22Z" fill="#FC7864"/><path d="M23.66 21.56L18.48 39.22A18.4 18.4 0 0 1 23.66 3.16Z" fill="#FEDC57"/><text x="22.9" y="21.1" class="ph">45.5 <tspan dx="2.8">%</tspan></text><text x="22.9" y="21.1" class="pl">45.5 <tspan dx="2.8">%</tspan></text><text x="11.4" y="38.8" class="ph">9.1 %</text><text x="11.4" y="38.8" class="pl">9.1 %</text><text x="0.1" y="21.1" class="ph">45.5 <tspan dx="0.9">%</tspan></text><text x="0.1" y="21.1" class="pl">45.5 <tspan dx="0.9">%</tspan></text></svg>
<svg x="443.29" y="485.99" width="45.93" height="41.33" viewBox="0.5 0.5 45.93 41.33"><path d="M23.66 21.56L23.66 3.16A18.4 18.4 0 0 1 29.02 39.17Z" fill="#6489FA"/><path d="M23.66 21.56L29.02 39.17A18.4 18.4 0 0 1 18.64 39.27Z" fill="#FC7864"/><path d="M23.66 21.56L18.64 39.27A18.4 18.4 0 0 1 23.66 3.16Z" fill="#FEDC57"/><text x="22.9" y="21.0" class="ph">45.3 <tspan dx="2.8">%</tspan></text><text x="22.9" y="21.0" class="pl">45.3 <tspan dx="2.8">%</tspan></text><text x="11.5" y="38.7" class="ph">9.1 %</text><text x="11.5" y="38.7" class="pl">9.1 %</text><text x="0.1" y="21.2" class="ph">45.6 <tspan dx="0.9">%</tspan></text><text x="0.1" y="21.2" class="pl">45.6 <tspan dx="0.9">%</tspan></text></svg>
<svg x="490.22" y="485.99" width="45.93" height="41.33" viewBox="0.5 0.5 45.93 41.33"><path d="M23.66 21.56L23.66 3.16A18.4 18.4 0 0 1 29.13 39.13Z" fill="#6489FA"/><path d="M23.66 21.56L29.13 39.13A18.4 18.4 0 0 1 18.87 39.33Z" fill="#FC7864"/><path d="M23.66 21.56L18.87 39.33A18.4 18.4 0 0 1 23.66 3.16Z" fill="#FEDC57"/><text x="22.9" y="21.0" class="ph">45.2 <tspan dx="2.8">%</tspan></text><text x="22.9" y="21.0" class="pl">45.2 <tspan dx="2.8">%</tspan></text><text x="11.7" y="38.7" class="ph">9.0 %</text><text x="11.7" y="38.7" class="pl">9.0 %</text><text x="0.1" y="21.2" class="ph">45.8 <tspan dx="0.9">%</tspan></text><text x="0.1" y="21.2" class="pl">45.8 <tspan dx="0.9">%</tspan></text></svg>
<svg x="537.15" y="485.99" width="45.93" height="41.33" viewBox="0.5 0.5 45.93 41.33"><path d="M23.66 21.56L23.66 3.16A18.4 18.4 0 0 1 28.85 39.22Z" fill="#6489FA"/><path d="M23.66 21.56L28.85 39.22A18.4 18.4 0 0 1 18.48 39.22Z" fill="#FC7864"/><path d="M23.66 21.56L18.48 39.22A18.4 18.4 0 0 1 23.66 3.16Z" fill="#FEDC57"/><text x="22.9" y="21.1" class="ph">45.5 <tspan dx="2.8">%</tspan></text><text x="22.9" y="21.1" class="pl">45.5 <tspan dx="2.8">%</tspan></text><text x="11.4" y="38.8" class="ph">9.1 %</text><text x="11.4" y="38.8" class="pl">9.1 %</text><text x="0.1" y="21.1" class="ph">45.5 <tspan dx="0.9">%</tspan></text><text x="0.1" y="21.1" class="pl">45.5 <tspan dx="0.9">%</tspan></text></svg>
<svg x="584.08" y="485.99" width="45.93" height="41.33" viewBox="0.5 0.5 45.93 41.33"><path d="M23.66 21.56L23.66 3.16A18.4 18.4 0 0 1 28.85 39.22Z" fill="#6489FA"/><path d="M23.66 21.56L28.85 39.22A18.4 18.4 0 0 1 18.48 39.22Z" fill="#FC7864"/><path d="M23.66 21.56L18.48 39.22A18.4 18.4 0 0 1 23.66 3.16Z" fill="#FEDC57"/><text x="22.9" y="21.1" class="ph">45.5 <tspan dx="2.8">%</tspan></text><text x="22.9" y="21.1" class="pl">45.5 <tspan dx="2.8">%</tspan></text><text x="11.4" y="38.8" class="ph">9.1 %</text><text x="11.4" y="38.8" class="pl">9.1 %</text><text x="0.1" y="21.1" class="ph">45.5 <tspan dx="0.9">%</tspan></text><text x="0.1" y="21.1" class="pl">45.5 <tspan dx="0.9">%</tspan></text></svg>
<svg x="660" y="343" width="85" height="190" viewBox="660 343 85 190">
<text x="664" y="348" class="lg">Sales Data</text>
</svg>
<text x="664" y="366" class="lg">Trellis by:</text>
<text x="664" y="379.9" class="lg">Quarter(D...</text>
<text x="664" y="398.2" class="lg">Day of We...</text>
<text x="664" y="419" class="lg">Color by:</text>
<text x="664" y="432.9" class="lg">Category</text>
<circle cx="669" cy="452.7" r="5.2" fill="#6489FA" stroke="#4f6fd6" stroke-width="1"/><text x="678.8" y="455.9" class="lg">Adult</text>
<circle cx="669" cy="469.1" r="5.2" fill="#FC7864" stroke="#d45a48" stroke-width="1"/><text x="678.8" y="472.3" class="lg">Child</text>
<circle cx="669" cy="485.2" r="5.2" fill="#FEDC57" stroke="#d8b73c" stroke-width="1"/><text x="678.8" y="488.4" class="lg">Senior</text>
<text x="664" y="506.7" class="lg">Sector size by:</text>
<text x="664" y="519.9" class="lg">Avg(Ticke...</text>
<!-- scrollbar -->
<rect x="750.5" y="343.5" width="9.5" height="187.5" fill="#f7f7f7" stroke="#dddddf" stroke-width="1"/>
<rect x="750.5" y="343.5" width="9.5" height="9.8" fill="#fdfdfd" stroke="#d6d6d9" stroke-width="1"/>
<rect x="750.5" y="521.4" width="9.5" height="9.8" fill="#fdfdfd" stroke="#d6d6d9" stroke-width="1"/>
<path d="M753.4 349.6h3.6l-1.8-2.2z" fill="#c0c1c6"/><path d="M753.4 525.2h3.6l-1.8 2.2z" fill="#c0c1c6"/>
<rect x="752.3" y="368.5" width="5.8" height="151.3" rx="2.9" fill="#c8c9cd"/>
<rect x="454" y="541" width="1" height="4" fill="#d0d0d0"/>
</svg>
</body></html>
